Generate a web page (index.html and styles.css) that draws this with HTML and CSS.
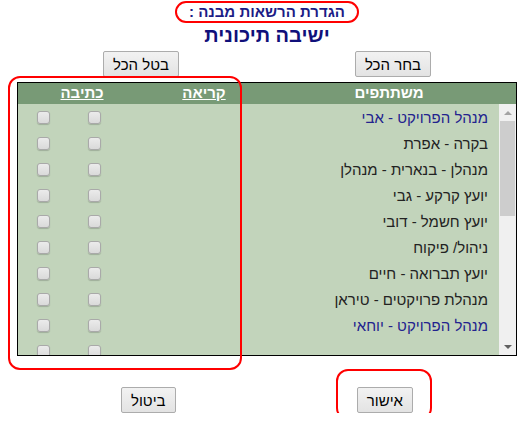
FILE: index.html
```html
<!DOCTYPE html>
<html lang="he" dir="rtl">
<head>
    <meta charset="UTF-8">
    <title>הגדרת הרשאות מבנה</title>
    <link rel="stylesheet" href="styles.css">
</head>
<body>

<div class="page">
    <div class="title"><span class="title-box">הגדרת הרשאות מבנה :</span></div>
    <div class="subtitle">ישיבה תיכונית</div>

    <div class="btn-row top">
        <button class="btn">בחר הכל</button>
        <button class="btn">בטל הכל</button>
    </div>

    <div class="grid-box">
        <div class="grid-head">
            <div>משתתפים</div>
            <div><u>קריאה</u></div>
            <div><u>כתיבה</u></div>
        </div>
        <div class="grid-main">
            <!-- פס גלילה (בצד ימין) -->
            <div class="scrollbar">
                <div class="sb-btn"><span class="arrow up"></span></div>
                <div class="sb-track"><div class="sb-thumb"></div></div>
                <div class="sb-btn"><span class="arrow down"></span></div>
            </div>
            <div class="grid-body" id="rows"></div>
        </div>
    </div>

    <div class="btn-row bottom">
        <button class="btn">אישור</button>
        <button class="btn">ביטול</button>
    </div>
</div>

<!-- סימונים אדומים -->
<div class="mark mark-cols"></div>
<div class="mark mark-ok"></div>

<script>
    const names = [
        'מנהל הפרויקט - אבי', 'בקרה - אפרת', 'מנהלן - בנארית - מנהלן', 'יועץ קרקע - גבי',
        'יועץ חשמל - דובי', 'ניהול/ פיקוח', 'יועץ תברואה - חיים', 'מנהלת פרויקטים - טיראן',
        'מנהל הפרויקט - יוחאי', '', 'אדריכל - משה', 'קונסטרוקטור - רון', 'יועץ מיזוג - דני',
        'יועץ אינסטלציה - שלום', 'מודד - יוסי', 'יועץ בטיחות - עמי', 'יועץ נגישות - רונית',
        'יועץ תנועה - גיל', 'יועץ קרינה - אלי', 'יועץ אקוסטיקה - נועה', 'יועץ תאורה - עדי',
        'מזמין - יובל'
    ];
    const rows = document.getElementById('rows');

    names.forEach((name) => {
        const row = document.createElement('div');
        row.className = 'grid-row';

        const label = document.createElement('div');
        label.className = 'name';
        if (name.indexOf('מנהל הפרויקט') === 0) label.classList.add('manager');
        label.textContent = name;
        row.appendChild(label);

        // קריאה, כתיבה
        for (let i = 0; i < 2; i++) {
            const cell = document.createElement('div');
            cell.className = 'check-cell';
            const cb = document.createElement('input');
            cb.type = 'checkbox';
            cb.className = 'check';
            cell.appendChild(cb);
            row.appendChild(cell);
        }
        rows.appendChild(row);
    });
</script>

</body>
</html>
```

FILE: styles.css
```css
html, body {
    margin: 0;
    background: #fff;
}

body {
    font-family: "Liberation Sans", Arial, sans-serif;
    position: relative;
}

.page {
    width: 500px;
    margin-right: 12px;
    padding-top: 1px;
}

.title {
    text-align: center;
    height: 22px;
}

.title-box {
    display: inline-block;
    box-sizing: border-box;
    height: 22px;
    line-height: 18px;
    padding: 0 12px;
    border: 2px solid #f00;
    border-radius: 11px;
    color: #1c1c86;
    font-size: 15px;
    font-weight: bold;
}

.subtitle {
    text-align: center;
    color: #10107a;
    font-size: 20px;
    font-weight: bold;
    line-height: 24px;
}

.btn-row {
    display: flex;
    justify-content: space-between;
}

.btn-row.top {
    padding: 4px 86px 0;
}

.btn-row.bottom {
    padding: 31px 104px 0;
}

.btn {
    height: 26px;
    padding: 0 9px;
    font-family: "Liberation Sans", Arial, sans-serif;
    font-size: 15px;
    color: #000;
    background: linear-gradient(#f2f2f2, #e3e3e3);
    border: 1px solid #acacac;
    border-radius: 2px;
}

.grid-box {
    margin-top: 5px;
    border: 1px solid #000;
    background: #c2d4bb;
}

.grid-head {
    display: grid;
    grid-template-columns: 254px 116px 1fr;
    height: 21px;
    line-height: 20px;
    background: #789a76;
    color: #fff;
    font-size: 15px;
    font-weight: bold;
    text-align: center;
}

.grid-main {
    display: flex;
    height: 251px;
}

.grid-body {
    flex: 1;
    overflow: hidden;
}

.grid-row {
    display: flex;
    align-items: center;
    height: 26px;
}

.name {
    flex: 1;
    padding-right: 11px;
    font-size: 15px;
    color: #222;
}

.name.manager {
    color: #22228e;
}

.check-cell {
    width: 51px;
    display: flex;
    justify-content: center;
}

.check {
    appearance: none;
    -webkit-appearance: none;
    margin: 0;
    width: 13px;
    height: 13px;
    box-sizing: border-box;
    border: 1px solid #a9a9a9;
    border-radius: 3px;
    background: linear-gradient(#ebebeb, #dadada);
    box-shadow: 0 1px 1px rgba(0, 0, 0, 0.18);
}

/* פס גלילה בסגנון ישן */
.scrollbar {
    width: 17px;
    background: #f0f0f0;
    display: flex;
    flex-direction: column;
}

.sb-btn {
    height: 17px;
    display: flex;
    align-items: center;
    justify-content: center;
}

.sb-track {
    flex: 1;
}

.sb-thumb {
    height: 95px;
    margin: 0 1px;
    background: #cdcdcd;
}

.arrow {
    width: 0;
    height: 0;
    border-left: 4px solid transparent;
    border-right: 4px solid transparent;
}

.arrow.up {
    border-bottom: 4px solid #a3a3a3;
}

.arrow.down {
    border-top: 4px solid #606060;
}

/* סימונים אדומים מעל התוכן */
.mark {
    position: absolute;
    box-sizing: border-box;
    border: 2px solid #f00;
    border-radius: 12px;
    pointer-events: none;
}

.mark-cols {
    left: 8px;
    top: 76px;
    width: 234px;
    height: 294px;
}

.mark-ok {
    left: 336px;
    top: 369px;
    width: 96px;
    height: 51px;
}
```
